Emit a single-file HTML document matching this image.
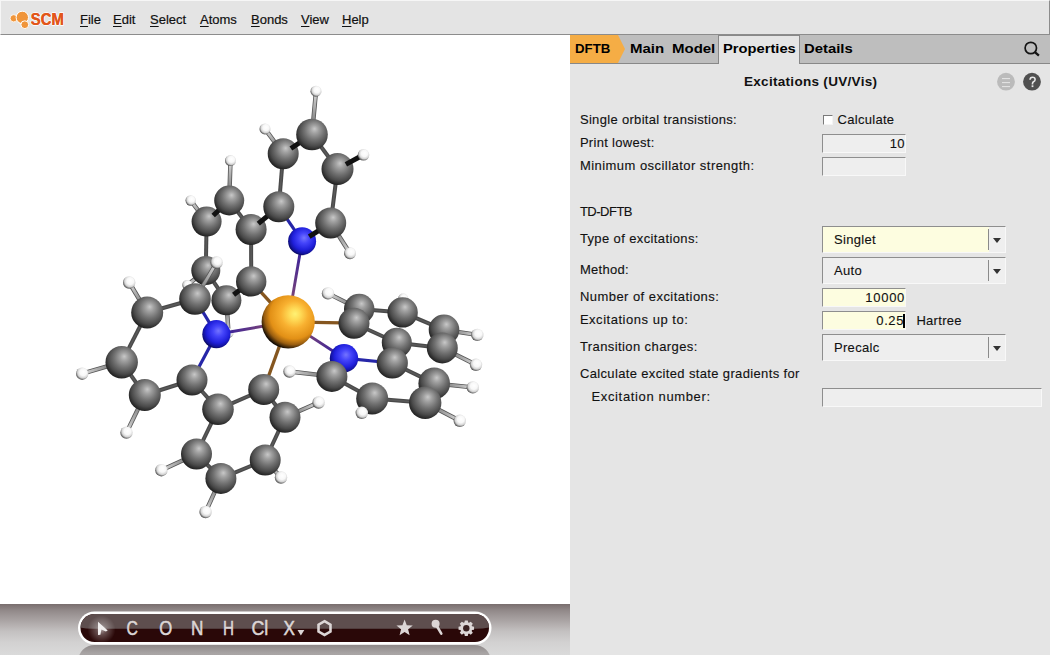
<!DOCTYPE html>
<html><head><meta charset="utf-8">
<style>
*{box-sizing:border-box}
html,body{margin:0;padding:0}
body{width:1050px;height:655px;overflow:hidden;position:relative;background:#e5e5e5;font-family:"Liberation Sans",sans-serif;color:#101010}
.abs{position:absolute}
#menubar{left:0;top:0;width:1050px;height:35px;background:#e4e4e4;border-bottom:1px solid #8c8c8c;border-top:1px solid #f6f6f6;border-left:1px solid #f6f6f6;border-right:1px solid #8c8c8c}
.mi{position:absolute;top:10.5px;font-size:13px;line-height:16px;white-space:nowrap;color:#111;-webkit-text-stroke:0.2px #111}
.mi u{text-decoration:underline;text-underline-offset:2px}
#canvas{left:0;top:35px;width:570px;height:569px;background:#fff;overflow:hidden}
#toolbar{left:0;top:604px;width:570px;height:51px;background:linear-gradient(#796e6e 0px,#938b8b 7px,#aba5a5 17px,#c3c0c0 27px,#d2d1d1 38px,#dadada 51px)}
#panel{left:570px;top:35px;width:480px;height:620px;background:#e5e5e5}
#tabbar{left:0;top:0;width:480px;height:29px;background:#bebebe;border-bottom:1px solid #888}
.tab{position:absolute;top:0;height:28px;font-size:13.5px;font-weight:bold;line-height:28px;white-space:nowrap;color:#000}
.lbl{position:absolute;left:10px;font-size:13px;letter-spacing:0.3px;white-space:nowrap;line-height:16px;color:#111;-webkit-text-stroke:0.12px #111}
.field{position:absolute;left:252px;border-top:1px solid #8e8e8e;border-left:1px solid #8e8e8e;border-right:1px solid #f8f8f8;border-bottom:1px solid #f8f8f8;background:#eeeeee}
.yellow{background:#fdfde0}
.combo .sep{position:absolute;right:16px;top:2px;bottom:2px;width:1px;background:#8a8a8a}
.combo .btn{position:absolute;right:0;top:0;bottom:0;width:16px;background:#efefef}
.combo .arr{position:absolute;right:4px;top:11px;width:0;height:0;border-left:4px solid transparent;border-right:4px solid transparent;border-top:5px solid #333}
.ctext{position:absolute;left:11px;font-size:13px;letter-spacing:0.3px;line-height:16px;white-space:nowrap;color:#111;-webkit-text-stroke:0.12px #111}
.num{position:absolute;right:2px;font-size:13px;letter-spacing:0.4px;line-height:16px;color:#111;-webkit-text-stroke:0.12px #111}
</style></head><body>

<div id="menubar" class="abs">
  <svg class="abs" style="left:-1px;top:-1px" width="70" height="34">
    <circle cx="13.7" cy="18.3" r="3.6" fill="#f0953a" stroke="#fff" stroke-width="0.8"/>
    <circle cx="22.3" cy="17.4" r="6.2" fill="#f0953a" stroke="#fff" stroke-width="1"/>
    <circle cx="24.8" cy="24.7" r="3.9" fill="#f0953a" stroke="#fff" stroke-width="1"/>
    <text x="30.8" y="25.4" font-family="Liberation Sans" font-weight="bold" font-size="15.8" fill="#e2561a" stroke="#fff" stroke-width="1.6" paint-order="stroke" textLength="33" lengthAdjust="spacingAndGlyphs">SCM</text><text x="30.8" y="25.4" font-family="Liberation Sans" font-weight="bold" font-size="15.8" fill="#e2561a" stroke="#e2561a" stroke-width="0.15" textLength="33" lengthAdjust="spacingAndGlyphs">SCM</text>
  </svg>
  <div class="mi" style="left:79px"><u>F</u>ile</div>
  <div class="mi" style="left:112px"><u>E</u>dit</div>
  <div class="mi" style="left:149px"><u>S</u>elect</div>
  <div class="mi" style="left:199px"><u>A</u>toms</div>
  <div class="mi" style="left:250px"><u>B</u>onds</div>
  <div class="mi" style="left:300px"><u>V</u>iew</div>
  <div class="mi" style="left:341px"><u>H</u>elp</div>
</div>

<div id="canvas" class="abs">
<svg width="570" height="569" style="position:absolute;left:0;top:0"><defs>
<radialGradient id="gC" cx="0.57" cy="0.4" r="0.62" fx="0.58" fy="0.32">
<stop offset="0" stop-color="#c8c8c8"/><stop offset="0.2" stop-color="#a2a2a2"/><stop offset="0.5" stop-color="#727272"/><stop offset="0.78" stop-color="#4a4a4a"/><stop offset="1" stop-color="#1e1e1e"/></radialGradient>
<radialGradient id="gH" cx="0.57" cy="0.42" r="0.62" fx="0.6" fy="0.35">
<stop offset="0" stop-color="#ffffff"/><stop offset="0.45" stop-color="#f8f8f8"/><stop offset="0.72" stop-color="#d4d4d4"/><stop offset="0.88" stop-color="#7a7a7a"/><stop offset="1" stop-color="#333"/></radialGradient>
<radialGradient id="gN" cx="0.56" cy="0.42" r="0.62" fx="0.57" fy="0.38">
<stop offset="0" stop-color="#7474ff"/><stop offset="0.3" stop-color="#4444fa"/><stop offset="0.65" stop-color="#2020dc"/><stop offset="0.85" stop-color="#12129c"/><stop offset="1" stop-color="#060640"/></radialGradient>
<radialGradient id="gIr" cx="0.6" cy="0.38" r="0.64" fx="0.63" fy="0.35">
<stop offset="0" stop-color="#fff274"/><stop offset="0.16" stop-color="#ffdc58"/><stop offset="0.4" stop-color="#f8b030"/><stop offset="0.7" stop-color="#e29016"/><stop offset="0.86" stop-color="#9a5e10"/><stop offset="1" stop-color="#140c04"/></radialGradient>
<linearGradient id="gbIrN1" gradientUnits="userSpaceOnUse" x1="288.2" y1="286.9" x2="302.1" y2="206.2"><stop offset="0.3" stop-color="#7a4478"/><stop offset="1" stop-color="#2a1aa4"/></linearGradient><linearGradient id="gbIrN2" gradientUnits="userSpaceOnUse" x1="288.2" y1="286.9" x2="216.4" y2="299.2"><stop offset="0.3" stop-color="#7a4478"/><stop offset="1" stop-color="#2a1aa4"/></linearGradient><linearGradient id="gbIrN3" gradientUnits="userSpaceOnUse" x1="288.2" y1="286.9" x2="344.0" y2="323.2"><stop offset="0.3" stop-color="#7a4478"/><stop offset="1" stop-color="#2a1aa4"/></linearGradient><linearGradient id="gbC1aH1a" gradientUnits="userSpaceOnUse" x1="330.7" y1="188.0" x2="350.0" y2="218.2"><stop offset="0.35" stop-color="#8a8a8a"/><stop offset="1" stop-color="#dadada"/></linearGradient><linearGradient id="gbC1cH1c" gradientUnits="userSpaceOnUse" x1="312.0" y1="99.5" x2="316.0" y2="56.2"><stop offset="0.35" stop-color="#8a8a8a"/><stop offset="1" stop-color="#dadada"/></linearGradient><linearGradient id="gbC1dH1d" gradientUnits="userSpaceOnUse" x1="283.2" y1="118.7" x2="265.0" y2="93.9"><stop offset="0.35" stop-color="#8a8a8a"/><stop offset="1" stop-color="#dadada"/></linearGradient><linearGradient id="gbC1gH1g" gradientUnits="userSpaceOnUse" x1="229.2" y1="165.5" x2="230.5" y2="125.6"><stop offset="0.35" stop-color="#8a8a8a"/><stop offset="1" stop-color="#dadada"/></linearGradient><linearGradient id="gbC1hH1h" gradientUnits="userSpaceOnUse" x1="206.6" y1="186.6" x2="190.7" y2="165.5"><stop offset="0.35" stop-color="#8a8a8a"/><stop offset="1" stop-color="#dadada"/></linearGradient><linearGradient id="gbC1iH1i" gradientUnits="userSpaceOnUse" x1="205.8" y1="235.5" x2="187.3" y2="250.1"><stop offset="0.35" stop-color="#8a8a8a"/><stop offset="1" stop-color="#dadada"/></linearGradient><linearGradient id="gbC1jH1j" gradientUnits="userSpaceOnUse" x1="226.4" y1="265.3" x2="228.5" y2="298.0"><stop offset="0.35" stop-color="#8a8a8a"/><stop offset="1" stop-color="#dadada"/></linearGradient><linearGradient id="gbC2aH2a" gradientUnits="userSpaceOnUse" x1="195.0" y1="264.0" x2="216.6" y2="227.5"><stop offset="0.35" stop-color="#8a8a8a"/><stop offset="1" stop-color="#dadada"/></linearGradient><linearGradient id="gbC2bH2b" gradientUnits="userSpaceOnUse" x1="147.2" y1="277.5" x2="129.2" y2="247.5"><stop offset="0.35" stop-color="#8a8a8a"/><stop offset="1" stop-color="#dadada"/></linearGradient><linearGradient id="gbC2cH2c" gradientUnits="userSpaceOnUse" x1="121.7" y1="327.2" x2="82.2" y2="338.7"><stop offset="0.35" stop-color="#8a8a8a"/><stop offset="1" stop-color="#dadada"/></linearGradient><linearGradient id="gbC2dH2d" gradientUnits="userSpaceOnUse" x1="144.8" y1="360.0" x2="126.5" y2="397.6"><stop offset="0.35" stop-color="#8a8a8a"/><stop offset="1" stop-color="#dadada"/></linearGradient><linearGradient id="gbC2hH2h" gradientUnits="userSpaceOnUse" x1="285.0" y1="382.3" x2="318.6" y2="367.5"><stop offset="0.35" stop-color="#8a8a8a"/><stop offset="1" stop-color="#dadada"/></linearGradient><linearGradient id="gbC2iH2i" gradientUnits="userSpaceOnUse" x1="265.2" y1="425.0" x2="281.0" y2="442.5"><stop offset="0.35" stop-color="#8a8a8a"/><stop offset="1" stop-color="#dadada"/></linearGradient><linearGradient id="gbC2jH2j" gradientUnits="userSpaceOnUse" x1="220.9" y1="443.4" x2="205.6" y2="477.0"><stop offset="0.35" stop-color="#8a8a8a"/><stop offset="1" stop-color="#dadada"/></linearGradient><linearGradient id="gbC2kH2k" gradientUnits="userSpaceOnUse" x1="196.5" y1="419.0" x2="161.4" y2="435.2"><stop offset="0.35" stop-color="#8a8a8a"/><stop offset="1" stop-color="#dadada"/></linearGradient><linearGradient id="gbC3aH3a" gradientUnits="userSpaceOnUse" x1="331.9" y1="341.4" x2="289.5" y2="336.5"><stop offset="0.35" stop-color="#8a8a8a"/><stop offset="1" stop-color="#dadada"/></linearGradient><linearGradient id="gbC3bH3b" gradientUnits="userSpaceOnUse" x1="372.2" y1="363.5" x2="361.8" y2="377.8"><stop offset="0.35" stop-color="#8a8a8a"/><stop offset="1" stop-color="#dadada"/></linearGradient><linearGradient id="gbC3cH3c" gradientUnits="userSpaceOnUse" x1="425.2" y1="367.8" x2="459.8" y2="385.8"><stop offset="0.35" stop-color="#8a8a8a"/><stop offset="1" stop-color="#dadada"/></linearGradient><linearGradient id="gbC3dH3d" gradientUnits="userSpaceOnUse" x1="434.2" y1="348.4" x2="472.8" y2="352.4"><stop offset="0.35" stop-color="#8a8a8a"/><stop offset="1" stop-color="#dadada"/></linearGradient><linearGradient id="gbC3hH3h" gradientUnits="userSpaceOnUse" x1="359.2" y1="274.0" x2="328.0" y2="258.4"><stop offset="0.35" stop-color="#8a8a8a"/><stop offset="1" stop-color="#dadada"/></linearGradient><linearGradient id="gbC3iH3i" gradientUnits="userSpaceOnUse" x1="402.6" y1="277.4" x2="403.2" y2="263.5"><stop offset="0.35" stop-color="#8a8a8a"/><stop offset="1" stop-color="#dadada"/></linearGradient><linearGradient id="gbC3jH3j" gradientUnits="userSpaceOnUse" x1="444.0" y1="294.8" x2="477.3" y2="299.9"><stop offset="0.35" stop-color="#8a8a8a"/><stop offset="1" stop-color="#dadada"/></linearGradient><linearGradient id="gbC3kH3k" gradientUnits="userSpaceOnUse" x1="442.3" y1="312.9" x2="476.0" y2="329.8"><stop offset="0.35" stop-color="#8a8a8a"/><stop offset="1" stop-color="#dadada"/></linearGradient></defs><line x1="402.6" y1="277.4" x2="403.2" y2="263.5" stroke="#555" stroke-width="4.4" /><line x1="402.6" y1="277.4" x2="403.2" y2="263.5" stroke="url(#gbC3iH3i)" stroke-width="2.8" /><circle cx="403.2" cy="263.5" r="5.0" fill="url(#gH)"/><line x1="359.2" y1="274.0" x2="328.0" y2="258.4" stroke="#555" stroke-width="4.4" /><line x1="359.2" y1="274.0" x2="328.0" y2="258.4" stroke="url(#gbC3hH3h)" stroke-width="2.8" /><circle cx="328.0" cy="258.4" r="6.2" fill="url(#gH)"/><line x1="205.8" y1="235.5" x2="187.3" y2="250.1" stroke="#555" stroke-width="4.4" /><line x1="205.8" y1="235.5" x2="187.3" y2="250.1" stroke="url(#gbC1iH1i)" stroke-width="2.8" /><line x1="226.4" y1="265.3" x2="228.5" y2="298.0" stroke="#555" stroke-width="4.4" /><line x1="226.4" y1="265.3" x2="228.5" y2="298.0" stroke="url(#gbC1jH1j)" stroke-width="2.8" /><circle cx="187.3" cy="250.1" r="5.0" fill="url(#gH)"/><circle cx="228.5" cy="298.0" r="5.0" fill="url(#gH)"/><line x1="354.0" y1="288.2" x2="359.2" y2="274.0" stroke="#4a4a4a" stroke-width="4.0" /><line x1="354.0" y1="288.2" x2="359.2" y2="274.0" stroke="#5a5a5a" stroke-width="1.4" /><line x1="359.2" y1="274.0" x2="402.6" y2="277.4" stroke="#4a4a4a" stroke-width="4.0" /><line x1="359.2" y1="274.0" x2="402.6" y2="277.4" stroke="#5a5a5a" stroke-width="1.4" /><circle cx="359.2" cy="274.0" r="15.2" fill="url(#gC)"/><line x1="402.6" y1="277.4" x2="444.0" y2="294.8" stroke="#4a4a4a" stroke-width="4.0" /><line x1="402.6" y1="277.4" x2="444.0" y2="294.8" stroke="#5a5a5a" stroke-width="1.4" /><circle cx="402.6" cy="277.4" r="15.2" fill="url(#gC)"/><line x1="288.2" y1="286.9" x2="302.1" y2="206.2" stroke="url(#gbIrN1)" stroke-width="2.9" /><line x1="330.7" y1="188.0" x2="337.5" y2="134.0" stroke="#4a4a4a" stroke-width="4.0" /><line x1="330.7" y1="188.0" x2="337.5" y2="134.0" stroke="#5a5a5a" stroke-width="1.4" /><line x1="337.5" y1="134.0" x2="312.0" y2="99.5" stroke="#4a4a4a" stroke-width="4.0" /><line x1="337.5" y1="134.0" x2="312.0" y2="99.5" stroke="#5a5a5a" stroke-width="1.4" /><line x1="283.2" y1="118.7" x2="278.8" y2="171.8" stroke="#4a4a4a" stroke-width="4.0" /><line x1="283.2" y1="118.7" x2="278.8" y2="171.8" stroke="#5a5a5a" stroke-width="1.4" /><line x1="278.8" y1="171.8" x2="302.1" y2="206.2" stroke="#2626a8" stroke-width="3.2" /><line x1="283.2" y1="118.7" x2="265.0" y2="93.9" stroke="#555" stroke-width="4.4" /><line x1="283.2" y1="118.7" x2="265.0" y2="93.9" stroke="url(#gbC1dH1d)" stroke-width="2.8" /><line x1="251.1" y1="194.5" x2="229.2" y2="165.5" stroke="#4a4a4a" stroke-width="4.0" /><line x1="251.1" y1="194.5" x2="229.2" y2="165.5" stroke="#5a5a5a" stroke-width="1.4" /><line x1="206.6" y1="186.6" x2="205.8" y2="235.5" stroke="#4a4a4a" stroke-width="4.0" /><line x1="206.6" y1="186.6" x2="205.8" y2="235.5" stroke="#5a5a5a" stroke-width="1.4" /><line x1="205.8" y1="235.5" x2="226.4" y2="265.3" stroke="#4a4a4a" stroke-width="4.0" /><line x1="205.8" y1="235.5" x2="226.4" y2="265.3" stroke="#5a5a5a" stroke-width="1.4" /><line x1="251.2" y1="246.4" x2="251.1" y2="194.5" stroke="#4a4a4a" stroke-width="4.0" /><line x1="251.2" y1="246.4" x2="251.1" y2="194.5" stroke="#5a5a5a" stroke-width="1.4" /><line x1="206.6" y1="186.6" x2="190.7" y2="165.5" stroke="#555" stroke-width="4.4" /><line x1="206.6" y1="186.6" x2="190.7" y2="165.5" stroke="url(#gbC1hH1h)" stroke-width="2.8" /><line x1="265.2" y1="425.0" x2="281.0" y2="442.5" stroke="#555" stroke-width="4.4" /><line x1="265.2" y1="425.0" x2="281.0" y2="442.5" stroke="url(#gbC2iH2i)" stroke-width="2.8" /><circle cx="302.1" cy="206.2" r="14.0" fill="url(#gN)"/><circle cx="337.5" cy="134.0" r="16.0" fill="url(#gC)"/><circle cx="283.2" cy="118.7" r="15.5" fill="url(#gC)"/><circle cx="251.1" cy="194.5" r="15.5" fill="url(#gC)"/><circle cx="206.6" cy="186.6" r="15.0" fill="url(#gC)"/><circle cx="205.8" cy="235.5" r="14.5" fill="url(#gC)"/><circle cx="281.0" cy="442.5" r="6.2" fill="url(#gH)"/><line x1="288.2" y1="286.9" x2="354.0" y2="288.2" stroke="#85561f" stroke-width="3.3" /><line x1="396.8" y1="307.7" x2="354.0" y2="288.2" stroke="#4a4a4a" stroke-width="4.0" /><line x1="396.8" y1="307.7" x2="354.0" y2="288.2" stroke="#5a5a5a" stroke-width="1.4" /><circle cx="354.0" cy="288.2" r="15.5" fill="url(#gC)"/><line x1="444.0" y1="294.8" x2="442.3" y2="312.9" stroke="#4a4a4a" stroke-width="4.0" /><line x1="444.0" y1="294.8" x2="442.3" y2="312.9" stroke="#5a5a5a" stroke-width="1.4" /><line x1="444.0" y1="294.8" x2="477.3" y2="299.9" stroke="#555" stroke-width="4.4" /><line x1="444.0" y1="294.8" x2="477.3" y2="299.9" stroke="url(#gbC3jH3j)" stroke-width="2.8" /><circle cx="444.0" cy="294.8" r="15.3" fill="url(#gC)"/><circle cx="226.4" cy="265.3" r="15.0" fill="url(#gC)"/><circle cx="477.3" cy="299.9" r="6.2" fill="url(#gH)"/><line x1="288.2" y1="286.9" x2="216.4" y2="299.2" stroke="url(#gbIrN2)" stroke-width="2.9" /><line x1="288.2" y1="286.9" x2="344.0" y2="323.2" stroke="url(#gbIrN3)" stroke-width="2.9" /><line x1="288.2" y1="286.9" x2="251.2" y2="246.4" stroke="#85561f" stroke-width="3.3" /><line x1="288.2" y1="286.9" x2="263.7" y2="354.5" stroke="#85561f" stroke-width="3.3" /><line x1="330.7" y1="188.0" x2="350.0" y2="218.2" stroke="#555" stroke-width="4.4" /><line x1="330.7" y1="188.0" x2="350.0" y2="218.2" stroke="url(#gbC1aH1a)" stroke-width="2.8" /><line x1="312.0" y1="99.5" x2="316.0" y2="56.2" stroke="#555" stroke-width="4.4" /><line x1="312.0" y1="99.5" x2="316.0" y2="56.2" stroke="url(#gbC1cH1c)" stroke-width="2.8" /><line x1="229.2" y1="165.5" x2="230.5" y2="125.6" stroke="#555" stroke-width="4.4" /><line x1="229.2" y1="165.5" x2="230.5" y2="125.6" stroke="url(#gbC1gH1g)" stroke-width="2.8" /><line x1="195.0" y1="264.0" x2="147.2" y2="277.5" stroke="#4a4a4a" stroke-width="4.0" /><line x1="195.0" y1="264.0" x2="147.2" y2="277.5" stroke="#5a5a5a" stroke-width="1.4" /><line x1="147.2" y1="277.5" x2="121.7" y2="327.2" stroke="#4a4a4a" stroke-width="4.0" /><line x1="147.2" y1="277.5" x2="121.7" y2="327.2" stroke="#5a5a5a" stroke-width="1.4" /><line x1="121.7" y1="327.2" x2="144.8" y2="360.0" stroke="#4a4a4a" stroke-width="4.0" /><line x1="121.7" y1="327.2" x2="144.8" y2="360.0" stroke="#5a5a5a" stroke-width="1.4" /><line x1="144.8" y1="360.0" x2="192.0" y2="345.0" stroke="#4a4a4a" stroke-width="4.0" /><line x1="144.8" y1="360.0" x2="192.0" y2="345.0" stroke="#5a5a5a" stroke-width="1.4" /><line x1="192.0" y1="345.0" x2="216.4" y2="299.2" stroke="#2626a8" stroke-width="3.2" /><line x1="147.2" y1="277.5" x2="129.2" y2="247.5" stroke="#555" stroke-width="4.4" /><line x1="147.2" y1="277.5" x2="129.2" y2="247.5" stroke="url(#gbC2bH2b)" stroke-width="2.8" /><line x1="121.7" y1="327.2" x2="82.2" y2="338.7" stroke="#555" stroke-width="4.4" /><line x1="121.7" y1="327.2" x2="82.2" y2="338.7" stroke="url(#gbC2cH2c)" stroke-width="2.8" /><line x1="144.8" y1="360.0" x2="126.5" y2="397.6" stroke="#555" stroke-width="4.4" /><line x1="144.8" y1="360.0" x2="126.5" y2="397.6" stroke="url(#gbC2dH2d)" stroke-width="2.8" /><line x1="192.0" y1="345.0" x2="218.0" y2="374.3" stroke="#4a4a4a" stroke-width="4.0" /><line x1="192.0" y1="345.0" x2="218.0" y2="374.3" stroke="#5a5a5a" stroke-width="1.4" /><line x1="218.0" y1="374.3" x2="263.7" y2="354.5" stroke="#4a4a4a" stroke-width="4.0" /><line x1="218.0" y1="374.3" x2="263.7" y2="354.5" stroke="#5a5a5a" stroke-width="1.4" /><line x1="263.7" y1="354.5" x2="285.0" y2="382.3" stroke="#4a4a4a" stroke-width="4.0" /><line x1="263.7" y1="354.5" x2="285.0" y2="382.3" stroke="#5a5a5a" stroke-width="1.4" /><line x1="285.0" y1="382.3" x2="265.2" y2="425.0" stroke="#4a4a4a" stroke-width="4.0" /><line x1="285.0" y1="382.3" x2="265.2" y2="425.0" stroke="#5a5a5a" stroke-width="1.4" /><line x1="265.2" y1="425.0" x2="220.9" y2="443.4" stroke="#4a4a4a" stroke-width="4.0" /><line x1="265.2" y1="425.0" x2="220.9" y2="443.4" stroke="#5a5a5a" stroke-width="1.4" /><line x1="220.9" y1="443.4" x2="196.5" y2="419.0" stroke="#4a4a4a" stroke-width="4.0" /><line x1="220.9" y1="443.4" x2="196.5" y2="419.0" stroke="#5a5a5a" stroke-width="1.4" /><line x1="196.5" y1="419.0" x2="218.0" y2="374.3" stroke="#4a4a4a" stroke-width="4.0" /><line x1="196.5" y1="419.0" x2="218.0" y2="374.3" stroke="#5a5a5a" stroke-width="1.4" /><line x1="285.0" y1="382.3" x2="318.6" y2="367.5" stroke="#555" stroke-width="4.4" /><line x1="285.0" y1="382.3" x2="318.6" y2="367.5" stroke="url(#gbC2hH2h)" stroke-width="2.8" /><line x1="220.9" y1="443.4" x2="205.6" y2="477.0" stroke="#555" stroke-width="4.4" /><line x1="220.9" y1="443.4" x2="205.6" y2="477.0" stroke="url(#gbC2jH2j)" stroke-width="2.8" /><line x1="196.5" y1="419.0" x2="161.4" y2="435.2" stroke="#555" stroke-width="4.4" /><line x1="196.5" y1="419.0" x2="161.4" y2="435.2" stroke="url(#gbC2kH2k)" stroke-width="2.8" /><circle cx="288.2" cy="286.9" r="26.6" fill="url(#gIr)"/><circle cx="350.0" cy="218.2" r="6.0" fill="url(#gH)"/><circle cx="316.0" cy="56.2" r="5.5" fill="url(#gH)"/><circle cx="265.0" cy="93.9" r="5.5" fill="url(#gH)"/><circle cx="230.5" cy="125.6" r="5.5" fill="url(#gH)"/><circle cx="190.7" cy="165.5" r="5.2" fill="url(#gH)"/><circle cx="147.2" cy="277.5" r="16.0" fill="url(#gC)"/><circle cx="121.7" cy="327.2" r="16.2" fill="url(#gC)"/><circle cx="144.8" cy="360.0" r="16.0" fill="url(#gC)"/><circle cx="192.0" cy="345.0" r="15.5" fill="url(#gC)"/><circle cx="129.2" cy="247.5" r="6.2" fill="url(#gH)"/><circle cx="82.2" cy="338.7" r="6.2" fill="url(#gH)"/><circle cx="126.5" cy="397.6" r="6.2" fill="url(#gH)"/><circle cx="218.0" cy="374.3" r="15.8" fill="url(#gC)"/><circle cx="263.7" cy="354.5" r="15.5" fill="url(#gC)"/><circle cx="285.0" cy="382.3" r="15.5" fill="url(#gC)"/><circle cx="265.2" cy="425.0" r="15.5" fill="url(#gC)"/><circle cx="220.9" cy="443.4" r="15.5" fill="url(#gC)"/><circle cx="196.5" cy="419.0" r="15.5" fill="url(#gC)"/><circle cx="318.6" cy="367.5" r="6.2" fill="url(#gH)"/><circle cx="205.6" cy="477.0" r="6.2" fill="url(#gH)"/><circle cx="161.4" cy="435.2" r="6.2" fill="url(#gH)"/><line x1="392.3" y1="328.0" x2="396.8" y2="307.7" stroke="#4a4a4a" stroke-width="4.0" /><line x1="392.3" y1="328.0" x2="396.8" y2="307.7" stroke="#5a5a5a" stroke-width="1.4" /><line x1="442.3" y1="312.9" x2="396.8" y2="307.7" stroke="#4a4a4a" stroke-width="4.0" /><line x1="442.3" y1="312.9" x2="396.8" y2="307.7" stroke="#5a5a5a" stroke-width="1.4" /><circle cx="396.8" cy="307.7" r="15.0" fill="url(#gC)"/><line x1="442.3" y1="312.9" x2="476.0" y2="329.8" stroke="#555" stroke-width="4.4" /><line x1="442.3" y1="312.9" x2="476.0" y2="329.8" stroke="url(#gbC3kH3k)" stroke-width="2.8" /><circle cx="442.3" cy="312.9" r="15.5" fill="url(#gC)"/><line x1="344.0" y1="323.2" x2="331.9" y2="341.4" stroke="#2626a8" stroke-width="3.2" /><line x1="392.3" y1="328.0" x2="344.0" y2="323.2" stroke="#2626a8" stroke-width="3.2" /><circle cx="344.0" cy="323.2" r="14.2" fill="url(#gN)"/><line x1="330.7" y1="188.0" x2="309.2" y2="201.7" stroke="#111" stroke-width="5.0" /><line x1="312.0" y1="99.5" x2="290.9" y2="113.5" stroke="#111" stroke-width="5.0" /><line x1="363.5" y1="119.8" x2="345.9" y2="129.4" stroke="#111" stroke-width="5.0" /><line x1="278.8" y1="171.8" x2="258.3" y2="188.6" stroke="#111" stroke-width="5.0" /><line x1="229.2" y1="165.5" x2="213.2" y2="180.5" stroke="#111" stroke-width="5.0" /><line x1="251.2" y1="246.4" x2="233.6" y2="259.8" stroke="#111" stroke-width="5.0" /><line x1="216.4" y1="299.2" x2="195.0" y2="264.0" stroke="#2626a8" stroke-width="3.2" /><circle cx="330.7" cy="188.0" r="15.5" fill="url(#gC)"/><circle cx="312.0" cy="99.5" r="15.8" fill="url(#gC)"/><circle cx="278.8" cy="171.8" r="15.5" fill="url(#gC)"/><circle cx="363.5" cy="119.8" r="5.8" fill="url(#gH)"/><circle cx="229.2" cy="165.5" r="15.0" fill="url(#gC)"/><circle cx="251.2" cy="246.4" r="15.2" fill="url(#gC)"/><circle cx="216.4" cy="299.2" r="14.1" fill="url(#gN)"/><line x1="434.2" y1="348.4" x2="392.3" y2="328.0" stroke="#4a4a4a" stroke-width="4.0" /><line x1="434.2" y1="348.4" x2="392.3" y2="328.0" stroke="#5a5a5a" stroke-width="1.4" /><circle cx="392.3" cy="328.0" r="15.6" fill="url(#gC)"/><circle cx="476.0" cy="329.8" r="6.2" fill="url(#gH)"/><line x1="331.9" y1="341.4" x2="289.5" y2="336.5" stroke="#555" stroke-width="4.4" /><line x1="331.9" y1="341.4" x2="289.5" y2="336.5" stroke="url(#gbC3aH3a)" stroke-width="2.8" /><circle cx="289.5" cy="336.5" r="6.2" fill="url(#gH)"/><line x1="331.9" y1="341.4" x2="372.2" y2="363.5" stroke="#4a4a4a" stroke-width="4.0" /><line x1="331.9" y1="341.4" x2="372.2" y2="363.5" stroke="#5a5a5a" stroke-width="1.4" /><circle cx="331.9" cy="341.4" r="15.5" fill="url(#gC)"/><line x1="195.0" y1="264.0" x2="216.6" y2="227.5" stroke="#555" stroke-width="4.4" /><line x1="195.0" y1="264.0" x2="216.6" y2="227.5" stroke="url(#gbC2aH2a)" stroke-width="2.8" /><circle cx="195.0" cy="264.0" r="15.8" fill="url(#gC)"/><line x1="425.2" y1="367.8" x2="434.2" y2="348.4" stroke="#4a4a4a" stroke-width="4.0" /><line x1="425.2" y1="367.8" x2="434.2" y2="348.4" stroke="#5a5a5a" stroke-width="1.4" /><line x1="434.2" y1="348.4" x2="472.8" y2="352.4" stroke="#555" stroke-width="4.4" /><line x1="434.2" y1="348.4" x2="472.8" y2="352.4" stroke="url(#gbC3dH3d)" stroke-width="2.8" /><circle cx="434.2" cy="348.4" r="15.8" fill="url(#gC)"/><circle cx="472.8" cy="352.4" r="6.2" fill="url(#gH)"/><line x1="372.2" y1="363.5" x2="425.2" y2="367.8" stroke="#4a4a4a" stroke-width="4.0" /><line x1="372.2" y1="363.5" x2="425.2" y2="367.8" stroke="#5a5a5a" stroke-width="1.4" /><line x1="372.2" y1="363.5" x2="361.8" y2="377.8" stroke="#555" stroke-width="4.4" /><line x1="372.2" y1="363.5" x2="361.8" y2="377.8" stroke="url(#gbC3bH3b)" stroke-width="2.8" /><circle cx="372.2" cy="363.5" r="16.0" fill="url(#gC)"/><circle cx="216.6" cy="227.5" r="6.2" fill="url(#gH)"/><line x1="425.2" y1="367.8" x2="459.8" y2="385.8" stroke="#555" stroke-width="4.4" /><line x1="425.2" y1="367.8" x2="459.8" y2="385.8" stroke="url(#gbC3cH3c)" stroke-width="2.8" /><circle cx="425.2" cy="367.8" r="16.2" fill="url(#gC)"/><circle cx="361.8" cy="377.8" r="6.2" fill="url(#gH)"/><circle cx="459.8" cy="385.8" r="6.2" fill="url(#gH)"/></svg>
</div>

<div id="toolbar" class="abs">
<svg width="570" height="51" style="position:absolute;left:0;top:0">
<defs>
<clipPath id="pillclip"><rect x="80.5" y="10" width="408.5" height="28" rx="14"/></clipPath>
<radialGradient id="glow" cx="0.5" cy="0.5" r="0.5"><stop offset="0" stop-color="#fff" stop-opacity="0.6"/><stop offset="0.35" stop-color="#fff" stop-opacity="0.28"/><stop offset="1" stop-color="#fff" stop-opacity="0"/></radialGradient>
<linearGradient id="refl" x1="0" y1="0" x2="0" y2="1"><stop offset="0" stop-color="#8e8989"/><stop offset="0.25" stop-color="#a8a4a4"/><stop offset="1" stop-color="#b4b0b0"/></linearGradient>
</defs>
<rect x="78" y="41" width="413" height="33" rx="16.5" fill="url(#refl)"/>
<rect x="78" y="7.5" width="413.5" height="33" rx="16.5" fill="#ffffff"/>
<rect x="80.5" y="10" width="408.5" height="28" rx="14" fill="#2a0808"/>
<g clip-path="url(#pillclip)"><path d="M70,0 H500 V20 Q490,24.7 476,24.7 H93 Q79,24.7 70,20 Z" fill="#5e4e4e"/></g>
<circle cx="101.5" cy="25.5" r="14" fill="url(#glow)"/>
<polygon points="98,17.8 107.7,26.4 105.9,27.6 101.4,25.6 100.4,30.8 98,30.9" fill="#f0eeee"/>
<g font-family="Liberation Sans" font-size="19.5" fill="#dcd6d6" stroke="#dcd6d6" stroke-width="0.5">
<text x="126.5" y="30.7" textLength="11.4" lengthAdjust="spacingAndGlyphs">C</text>
<text x="159.2" y="30.7" textLength="13" lengthAdjust="spacingAndGlyphs">O</text>
<text x="191" y="30.7" textLength="12.4" lengthAdjust="spacingAndGlyphs">N</text>
<text x="222.9" y="30.7" textLength="11" lengthAdjust="spacingAndGlyphs">H</text>
<text x="251.5" y="30.7" textLength="16.8" lengthAdjust="spacingAndGlyphs">Cl</text>
<text x="283.5" y="30.7" textLength="11.4" lengthAdjust="spacingAndGlyphs">X</text>
</g>
<polygon points="297.5,26 304.3,26 300.9,31.5" fill="#dcd6d6"/>
<polygon points="324.50,17.20 330.48,20.65 330.48,27.55 324.50,31.00 318.52,27.55 318.52,20.65" fill="none" stroke="#dcd6d6" stroke-width="2.6"/>
<polygon fill="#dcd6d6" points="404.60,15.60 406.77,21.21 412.78,21.54 408.12,25.34 409.65,31.16 404.60,27.90 399.55,31.16 401.08,25.34 396.42,21.54 402.43,21.21"/>
<circle cx="435.6" cy="19.7" r="4" fill="#dcd6d6"/>
<line x1="436.8" y1="22" x2="441.3" y2="29.6" stroke="#dcd6d6" stroke-width="2.6" stroke-linecap="round"/>
<polygon fill="#dcd6d6" points="472.01,22.35 474.06,22.72 474.06,25.68 472.01,26.05 471.65,26.92 472.83,28.64 470.74,30.73 469.02,29.55 468.15,29.91 467.78,31.96 464.82,31.96 464.45,29.91 463.58,29.55 461.86,30.73 459.77,28.64 460.95,26.92 460.59,26.05 458.54,25.68 458.54,22.72 460.59,22.35 460.95,21.48 459.77,19.76 461.86,17.67 463.58,18.85 464.45,18.49 464.82,16.44 467.78,16.44 468.15,18.49 469.02,18.85 470.74,17.67 472.83,19.76 471.65,21.48"/><circle cx="466.3" cy="24.2" r="3.2" fill="#3a2222"/>
</svg>
</div>

<div id="panel" class="abs">
  <div id="tabbar" class="abs">
    <svg class="abs" style="left:0;top:0" width="60" height="28"><polygon points="0,0 48,0 55,14 48,28 0,28" fill="#f5ad45"/></svg>
    <div class="tab" style="left:5px;transform:scaleX(0.98);transform-origin:0 0">DFTB</div>
    <div class="tab" style="left:60px;transform:scaleX(1.11);transform-origin:0 0">Main</div>
    <div class="tab" style="left:102px;transform:scaleX(1.11);transform-origin:0 0">Model</div>
    <div class="abs" style="left:148px;top:0;width:82px;height:29px;background:#e5e5e5;border-left:1px solid #888;border-right:1px solid #888;border-top:1px solid #888"></div>
    <div class="tab" style="left:153px;transform:scaleX(1.09);transform-origin:0 0">Properties</div>
    <div class="tab" style="left:234px;transform:scaleX(1.1);transform-origin:0 0">Details</div>
    <svg class="abs" style="left:452px;top:5px" width="20" height="20"><circle cx="8.8" cy="8" r="5.7" fill="none" stroke="#151515" stroke-width="1.7"/><line x1="12.6" y1="11.8" x2="16.9" y2="15.6" stroke="#151515" stroke-width="2.3" stroke-linecap="butt"/></svg>
  </div>
<div class="abs" style="left:174px;top:39px;font-size:13.5px;font-weight:bold;letter-spacing:0.3px;line-height:16px;white-space:nowrap;color:#111">Excitations (UV/Vis)</div>
<svg class="abs" style="left:426px;top:37px" width="46" height="20">
<circle cx="10" cy="9.7" r="8.9" fill="#bbbbbb"/>
<rect x="6" y="6" width="8" height="1.1" fill="#e2e2e2"/><rect x="6" y="10" width="8" height="1.1" fill="#e2e2e2"/><rect x="6" y="14" width="8" height="1.1" fill="#e2e2e2"/>
<circle cx="36" cy="9.7" r="8.9" fill="#505050"/>
<path d="M34.00,7.80 Q34.10,5.20 36.50,5.20 Q39.10,5.20 39.10,7.40 Q39.10,8.90 37.50,9.70 Q36.50,10.30 36.50,11.50 V12.50" fill="none" stroke="#e6e6e6" stroke-width="1.6"/><rect x="35.60" y="13.30" width="1.8" height="1.8" fill="#e6e6e6"/>
</svg>
<div class="lbl" style="left:9.9px;top:76.7px;letter-spacing:0.322px">Single orbital transistions:</div>
<div class="lbl" style="left:9.9px;top:99.7px;">Print lowest:</div>
<div class="lbl" style="left:9.9px;top:122.7px;letter-spacing:0.459px">Minimum oscillator strength:</div>
<div class="lbl" style="left:9.9px;top:168.7px;letter-spacing:-0.500px">TD-DFTB</div>
<div class="lbl" style="left:9.9px;top:195.7px;letter-spacing:0.379px">Type of excitations:</div>
<div class="lbl" style="left:9.9px;top:226.7px;">Method:</div>
<div class="lbl" style="left:9.9px;top:253.7px;letter-spacing:0.457px">Number of excitations:</div>
<div class="lbl" style="left:9.9px;top:276.7px;letter-spacing:0.529px">Excitations up to:</div>
<div class="lbl" style="left:9.9px;top:303.7px;letter-spacing:0.411px">Transition charges:</div>
<div class="lbl" style="left:9.9px;top:330.7px;letter-spacing:0.356px">Calculate excited state gradients for</div>
<div class="lbl" style="left:21.5px;top:353.7px;letter-spacing:0.641px">Excitation number:</div>
<div class="abs" style="left:253px;top:80px;width:10px;height:10px;background:#fff;border-top:1px solid #7a7a7a;border-left:1px solid #7a7a7a;border-right:1px solid #f4f4f4;border-bottom:1px solid #f4f4f4"></div>
<div class="lbl" style="left:267.5px;top:76.7px;">Calculate</div>
<div class="field " style="top:99px;width:84px;height:19px"><div class="num" style="top:1px;right:0px">10</div></div>
<div class="field " style="top:122px;width:84px;height:19px"></div>
<div class="field combo yellow" style="top:191px;width:184px;height:27px"><div class="ctext" style="top:5px">Singlet</div><div class="btn"></div><div class="sep"></div><div class="arr"></div></div>
<div class="field combo " style="top:222px;width:184px;height:27px"><div class="ctext" style="top:5px">Auto</div><div class="btn"></div><div class="sep"></div><div class="arr"></div></div>
<div class="field yellow" style="top:253px;width:84px;height:19px"><div class="num" style="top:1px;right:0px;letter-spacing:0.7px">10000</div></div>
<div class="field yellow" style="top:276px;width:84px;height:19px"><div class="num" style="top:1px;right:1px;letter-spacing:0.6px">0.25</div><div class="abs" style="left:80px;top:2px;width:2px;height:14px;background:#000"></div></div>
<div class="lbl" style="left:346.4px;top:277.5px;">Hartree</div>
<div class="field combo " style="top:299px;width:184px;height:27px"><div class="ctext" style="top:5px">Precalc</div><div class="btn"></div><div class="sep"></div><div class="arr"></div></div>
<div class="field " style="top:353px;width:220px;height:19px"></div>
</div>

</body></html>
